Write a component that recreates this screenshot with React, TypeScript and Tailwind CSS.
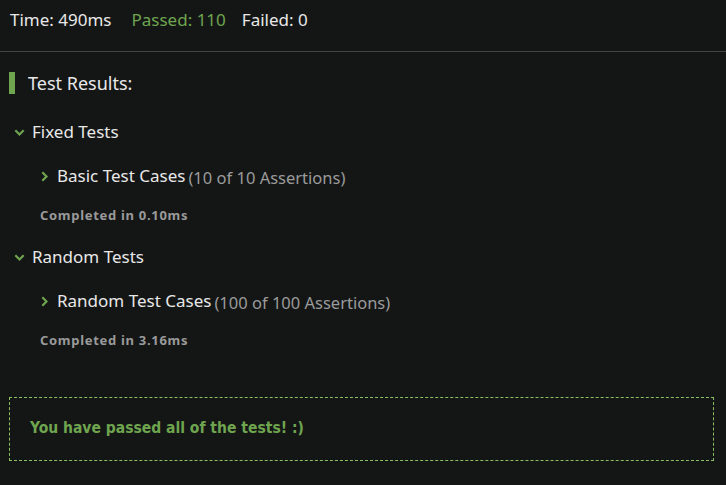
import React from 'react';

const Chevron = ({ down }: { down?: boolean }) => (
    <svg width="11" height="11" viewBox="0 0 10 10" className={down ? 'rotate-90' : ''}>
        <path d="M3 1.2 L6.8 5 L3 8.8" fill="none" stroke="#6fa54f" strokeWidth="2" />
    </svg>
);

interface Suite {
    name: string;
    caseName: string;
    assertions: string;
    time: string;
}

const suites: Suite[] = [
    { name: 'Fixed Tests', caseName: 'Basic Test Cases', assertions: '(10 of 10 Assertions)', time: '0.10ms' },
    { name: 'Random Tests', caseName: 'Random Test Cases', assertions: '(100 of 100 Assertions)', time: '3.16ms' },
];

export default function App() {
    return (
        <div
            className="w-[726px] h-[485px] bg-[#141616] text-[#e8e8e8] overflow-hidden"
            style={{ fontFamily: '"Noto Sans", "Open Sans", sans-serif' }}
        >
            {/* Summary bar */}
            <div className="h-[52px] border-b border-[#444] flex items-center gap-4 px-[10px] pb-[12px] text-[17px]">
                <span>Time: 490ms</span>
                <span className="text-[#6fa54f] ml-1">Passed: 110</span>
                <span>Failed: 0</span>
            </div>

            <div className="px-[9px]">
                {/* Heading */}
                <div className="flex items-center gap-[13px] mt-[19px] h-[24px]">
                    <div className="w-[6px] h-[22px] bg-[#6fa54f]" />
                    <span className="text-[18px]">Test Results:</span>
                </div>

                {suites.map((s, i) => (
                    <div key={s.name} className={i === 0 ? 'mt-[25px]' : 'mt-[21px]'}>
                        <div className="flex items-center gap-[7px] h-[24px] pl-[5px]">
                            <Chevron down />
                            <span className="text-[17px]">{s.name}</span>
                        </div>
                        <div className="flex items-center gap-[7px] h-[24px] mt-[20px] pl-[30px]">
                            <Chevron />
                            <span className="text-[17px]">{s.caseName}</span>
                            <span className="text-[16.5px] text-[#9b9b9b] mt-[4px] -ml-[4px]">{s.assertions}</span>
                        </div>
                        <div className="mt-[20px] h-[16px] flex items-center pl-[31px] text-[13px] font-bold tracking-[0.7px] text-[#9a9a9a]">
                            Completed in {s.time}
                        </div>
                    </div>
                ))}

                {/* Result box */}
                <div className="mt-[48px] w-[705px] h-[64px] border border-dashed border-[#8ac060] flex items-center px-[20px]">
                    <span
                        className="text-[#6fa54f] text-[15.5px] font-bold"
                        style={{ fontFamily: '"DejaVu Sans Condensed", "Noto Sans", sans-serif' }}
                    >
                        You have passed all of the tests! :)
                    </span>
                </div>
            </div>
        </div>
    );
}
